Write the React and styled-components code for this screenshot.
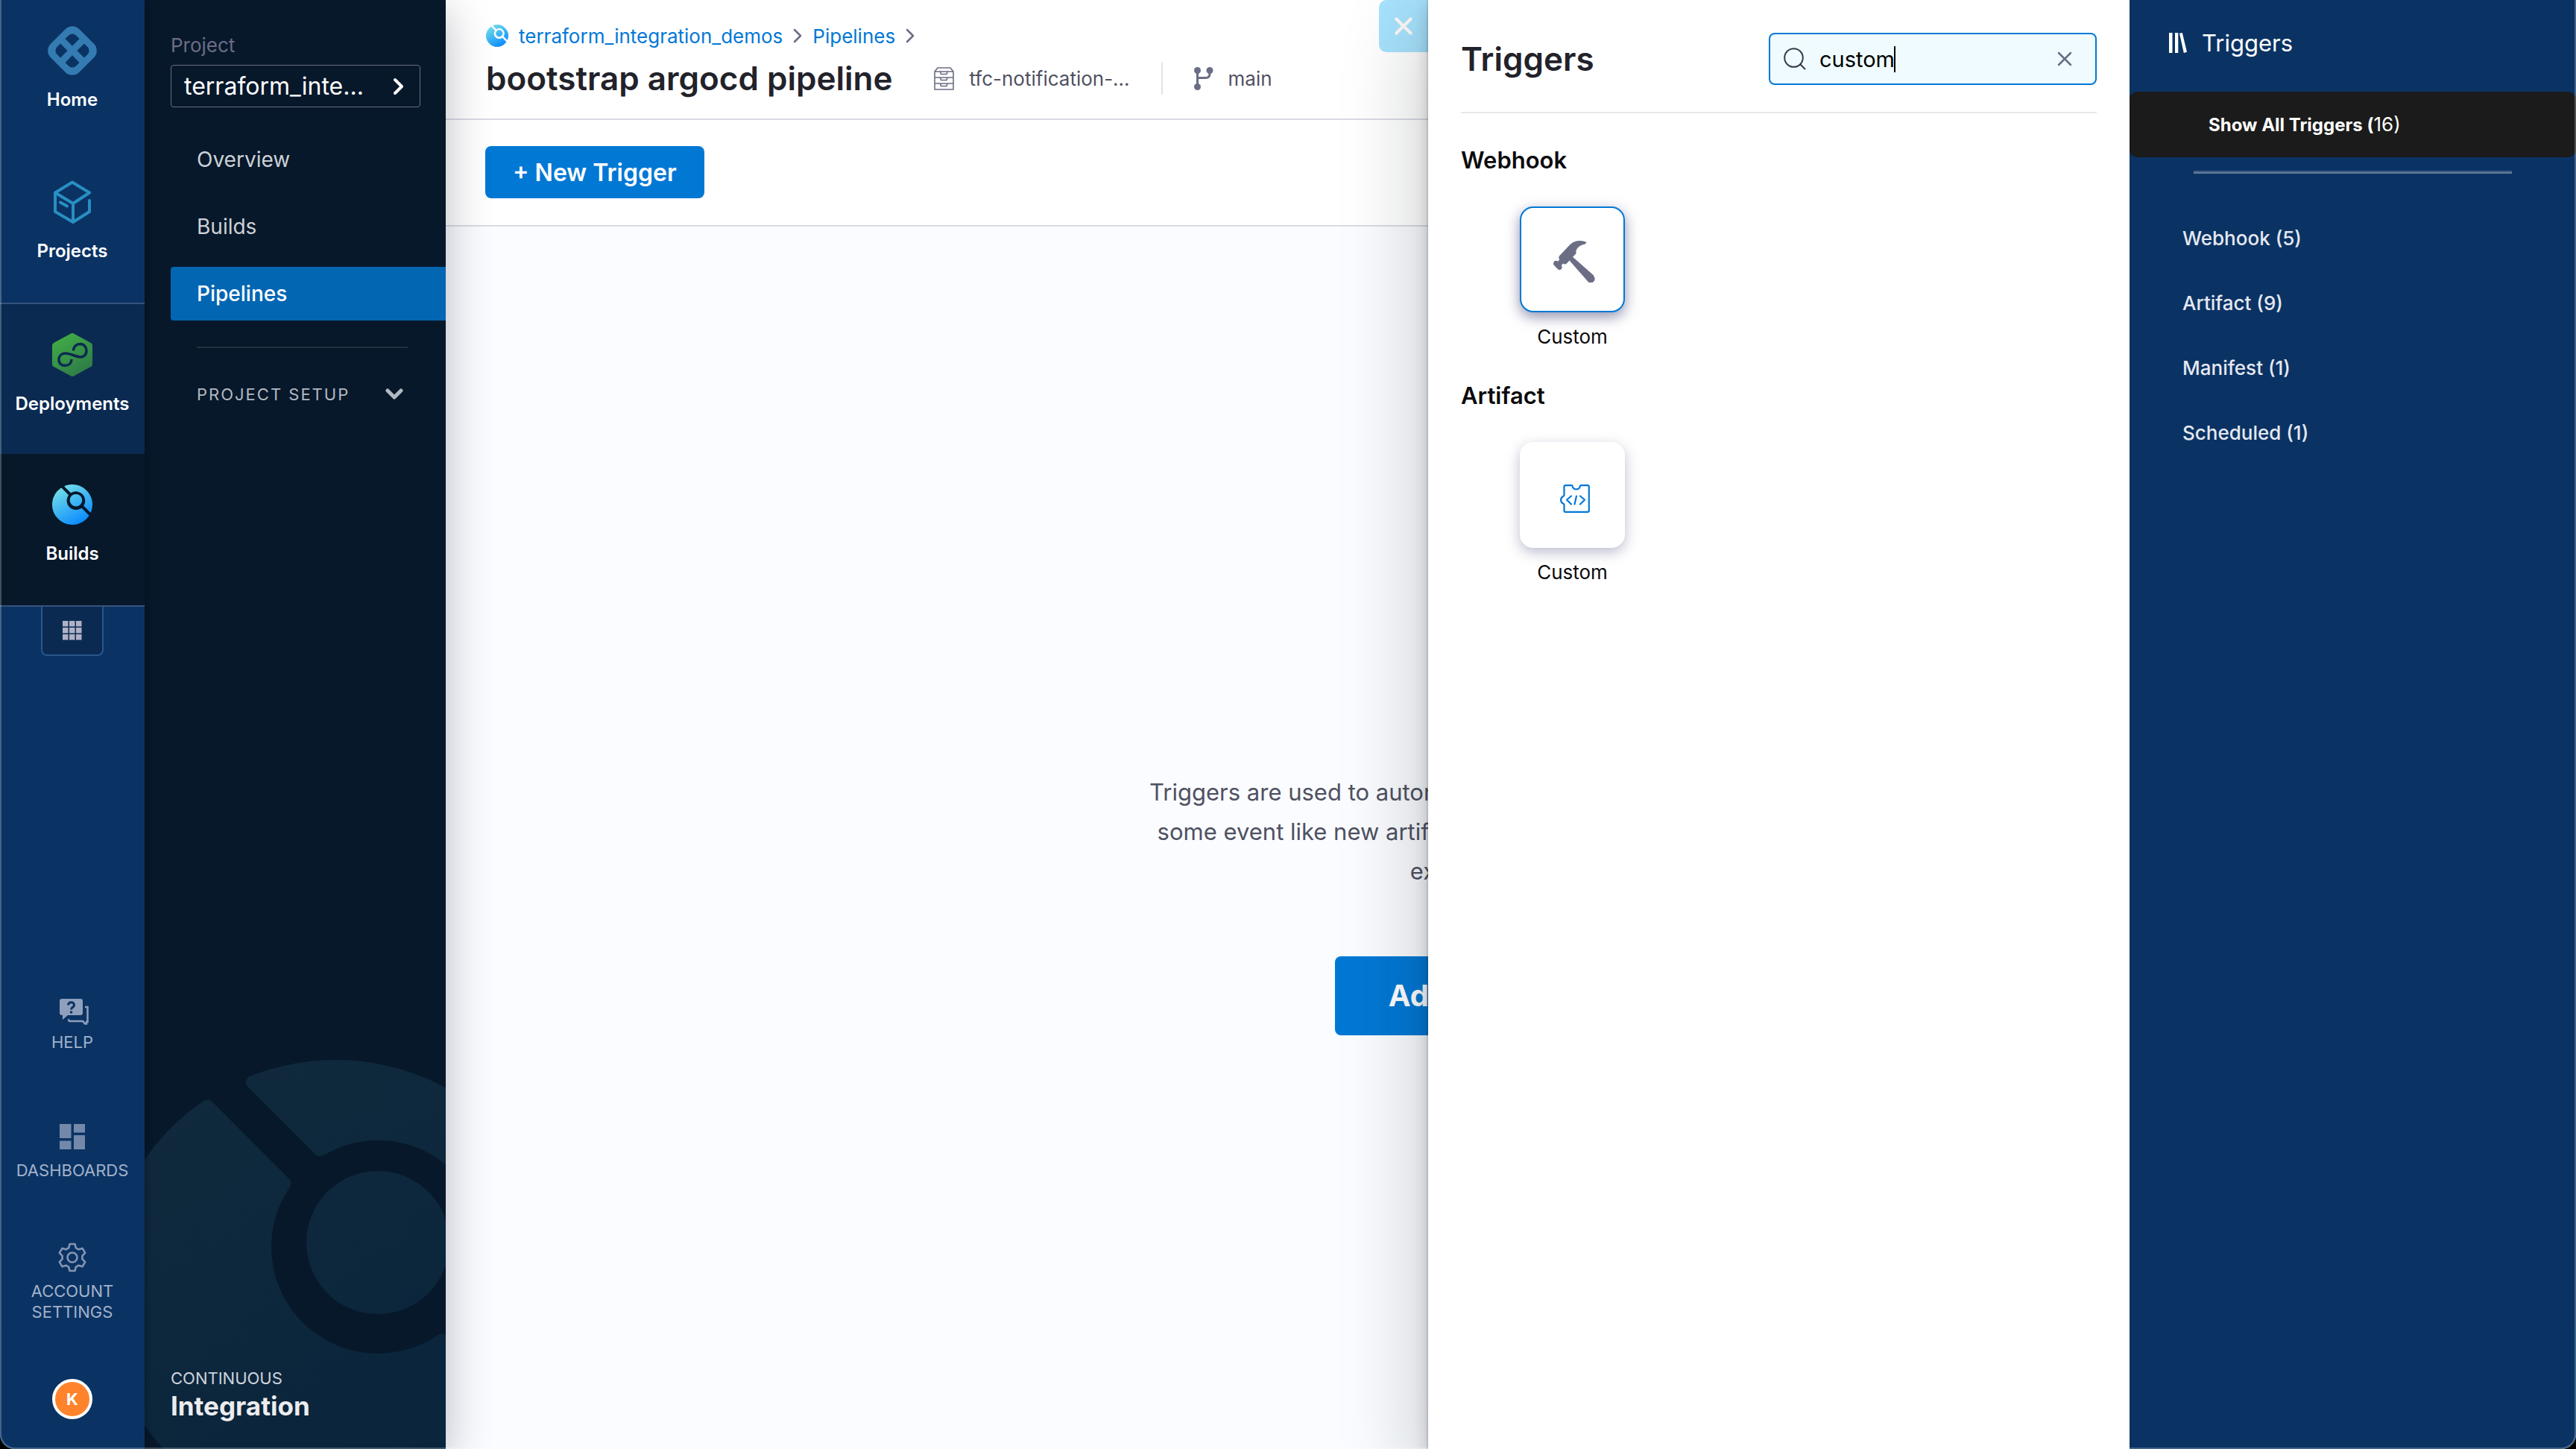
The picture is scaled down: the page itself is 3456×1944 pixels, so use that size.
import React from 'react';
import styled, { createGlobalStyle } from 'styled-components';

const GlobalStyle = createGlobalStyle`
  *, *::before, *::after { box-sizing: border-box; }
  html, body { margin: 0; background: #000; }
  body { font-family: Inter, "Liberation Sans", sans-serif; color: #22222a; }
  button, input { font: inherit; color: inherit; margin: 0; }
  button { border: 0; padding: 0; background: none; cursor: pointer; }
  a { color: inherit; text-decoration: none; }
  h1, h2, h3, p, ul { margin: 0; padding: 0; }
  ul { list-style: none; }
  svg { display: block; flex: none; }
`;

const Window = styled.div`
  position: relative;
  display: flex;
  height: 100vh;
  overflow: hidden;
  border-radius: 0 0 20px 20px;
  background: #fafcff;
  &::after {
    content: '';
    position: absolute;
    inset: 0;
    z-index: 9;
    border: 2px solid rgba(255, 255, 255, 0.24);
    border-top: 0;
    border-radius: 0 0 20px 20px;
    pointer-events: none;
  }
`;

/* Global rail */
const Rail = styled.nav`
  position: relative;
  z-index: 3;
  display: flex;
  flex-direction: column;
  align-items: center;
  flex: none;
  width: 194px;
  padding-bottom: 40px;
  background: #0a3364;
  box-shadow: 0 0 10px rgba(0, 0, 0, 0.4);
`;

const RailLink = styled.a`
  display: flex;
  flex-direction: column;
  align-items: center;
  gap: 17px;
  width: 100%;
  height: 203px;
  padding-top: 35px;
  color: #fff;
  font-size: 24px;
  font-weight: 600;
  line-height: 32px;
  background: ${(p) => p.$bg || 'transparent'};
  border-top: ${(p) => (p.$ruled ? '2px solid #38527a' : '0')};
`;

const RailIcon = styled.span`
  display: flex;
  align-items: center;
  height: 66px;
`;

const AppsButton = styled.button`
  display: flex;
  align-items: center;
  justify-content: center;
  width: 84px;
  height: 66px;
  background: #0a2a52;
  border: 2px solid #2a568c;
  border-top: 0;
  border-radius: 0 0 8px 8px;
`;

const RailRule = styled.div`
  width: 100%;
  height: 2px;
  background: #38527a;
`;

const RailFooter = styled.div`
  display: flex;
  flex-direction: column;
  align-items: center;
  margin-top: auto;
`;

const FooterLink = styled.a`
  display: flex;
  flex-direction: column;
  align-items: center;
  gap: ${(p) => p.$gap}px;
  margin-bottom: ${(p) => p.$after}px;
  color: #a3b1c9;
  font-size: 22px;
  line-height: 28px;
  text-align: center;
`;

const Avatar = styled.button`
  width: 54px;
  height: 54px;
  border: 4px solid #fff;
  border-radius: 50%;
  background: #ff832b;
  color: #fff;
  font-size: 22px;
  font-weight: 700;
  line-height: 44px;
`;

/* Project navigation */
const SideNav = styled.nav`
  position: relative;
  z-index: 2;
  display: flex;
  flex-direction: column;
  flex: none;
  width: 404px;
  padding: 45px 0 36px 35px;
  background: #07182b;
  box-shadow: 0 16px 56px rgba(40, 41, 61, 0.32);
`;

const Watermark = styled.div`
  position: absolute;
  inset: 0;
  overflow: hidden;
  svg { position: absolute; left: -56px; bottom: -102px; }
`;

const FieldLabel = styled.span`
  color: #6b6d85;
  font-size: 26px;
  line-height: 32px;
`;

const ProjectPicker = styled.button`
  display: flex;
  align-items: center;
  justify-content: space-between;
  width: 335px;
  height: 57px;
  margin-top: 10px;
  padding: 0 20px 0 17px;
  border: 1px solid #6b6d85;
  border-radius: 4px;
  color: #fff;
  font-size: 32px;
`;

const NavList = styled.ul`
  display: flex;
  flex-direction: column;
  gap: 18px;
  margin-top: 34px;
`;

const NavLink = styled.a`
  display: flex;
  align-items: center;
  height: 72px;
  padding-left: 35px;
  border-radius: 4px 0 0 4px;
  background: ${(p) => (p.$active ? '#0266b3' : 'transparent')};
  color: ${(p) => (p.$active ? '#fff' : '#cdd1d5')};
  font-size: 28px;
  font-weight: ${(p) => (p.$active ? 500 : 400)};
`;

const SetupToggle = styled.button`
  display: flex;
  align-items: center;
  justify-content: space-between;
  margin: 35px 51px 0 35px;
  padding: 46px 6px 0 0;
  border-top: 2px solid #20303f;
  color: #b3b9c0;
  font-size: 22px;
  line-height: 32px;
  letter-spacing: 2px;
`;

const ModuleName = styled.div`
  position: relative;
  margin-top: auto;
  color: #ececee;
  font-size: 35px;
  font-weight: 700;
  line-height: 44px;
  small {
    display: block;
    color: #cdd3dd;
    font-size: 22px;
    font-weight: 400;
    line-height: 30px;
  }
`;

/* Page */
const Page = styled.main`
  display: flex;
  flex-direction: column;
  flex: 1;
  min-width: 0;
`;

const PageHeader = styled.header`
  height: 161px;
  padding: 30px 52px 0 54px;
  background: #fff;
  border-bottom: 2px solid #d9dae6;
`;

const Crumbs = styled.div`
  display: flex;
  align-items: center;
  gap: 14px;
  height: 36px;
  color: #0278d5;
  font-size: 26px;
`;

const TitleRow = styled.div`
  display: flex;
  align-items: center;
  height: 78px;
`;

const Title = styled.h1`
  margin-right: 56px;
  font-size: 44px;
  font-weight: 600;
  line-height: 56px;
`;

const Meta = styled.span`
  display: flex;
  align-items: center;
  gap: 20px;
  color: #4f5162;
  font-size: 26px;
`;

const MetaDivider = styled.span`
  width: 2px;
  height: 44px;
  margin: 0 42px;
  background: #e3e3e8;
`;

const Toolbar = styled.div`
  padding: 35px 53px 36px;
  background: #fff;
  border-bottom: 2px solid #d9dae6;
`;

const Primary = styled.button`
  display: block;
  padding: 0 ${(p) => (p.$large ? 72 : 37)}px;
  height: ${(p) => (p.$large ? 106 : 70)}px;
  border-radius: 8px;
  background: #0278d5;
  color: #fff;
  font-size: ${(p) => (p.$large ? 40 : 32)}px;
  font-weight: ${(p) => (p.$large ? 700 : 600)};
  white-space: nowrap;
`;

const Empty = styled.section`
  display: flex;
  flex: 1;
  flex-direction: column;
  align-items: center;
  justify-content: center;
  gap: 88px;
  padding-top: 176px;
  color: #4f5162;
  font-size: 31px;
  line-height: 53px;
  text-align: center;
`;

/* Drawer */
const DrawerClose = styled.button`
  position: absolute;
  top: 0;
  right: 1540px;
  z-index: 4;
  display: flex;
  align-items: center;
  justify-content: center;
  width: 66px;
  height: 70px;
  border-radius: 10px 0 0 10px;
  background: #a7e2fc;
`;

const Drawer = styled.aside`
  position: absolute;
  top: 0;
  right: 0;
  bottom: 0;
  z-index: 5;
  display: flex;
  width: 1540px;
  background: #fff;
  box-shadow: 0 0 0 2px rgba(16, 22, 26, 0.1), 0 8px 18px rgba(16, 22, 26, 0.2),
    0 40px 100px 14px rgba(16, 22, 26, 0.2);
`;

const Catalog = styled.div`
  flex: 1;
  padding: 44px 44px 0;
`;

const CatalogHeader = styled.div`
  display: flex;
  align-items: center;
  justify-content: space-between;
  padding-bottom: 36px;
  border-bottom: 2px solid #e8e8ea;
`;

const DrawerTitle = styled.h2`
  font-size: 44px;
  font-weight: 600;
  line-height: 56px;
`;

const SearchBox = styled.label`
  display: flex;
  align-items: center;
  width: 440px;
  height: 70px;
  padding: 0 31px 0 18px;
  border: 2px solid #0278d5;
  border-radius: 8px;
  background: #effbff;
  color: #000;
  font-size: 29px;
`;

const SearchInput = styled.input`
  width: 100px;
  height: 36px;
  margin-left: 18px;
  padding: 0;
  border: 0;
  background: none;
  outline: none;
`;

const Caret = styled.span`
  width: 2px;
  height: 35px;
  margin-right: auto;
  background: #000;
`;

const Group = styled.section`
  padding-top: 43px;
  & + & { padding-top: 41px; }
`;

const GroupTitle = styled.h3`
  color: #0b0b0d;
  font-size: 31px;
  font-weight: 600;
  line-height: 40px;
`;

const TileButton = styled.button`
  display: flex;
  flex-direction: column;
  align-items: center;
  gap: 15px;
  width: 141px;
  margin: 42px 0 0 79px;
  color: #0b0b0d;
  font-size: 26px;
  line-height: 36px;
`;

const Tile = styled.span`
  display: flex;
  align-items: center;
  justify-content: center;
  width: 141px;
  height: 142px;
  padding: 5px 0 0 4px;
  border: 2px solid ${(p) => (p.$selected ? '#0278d5' : '#fff')};
  border-radius: 18px;
  background: #fff;
  box-shadow: ${(p) => (p.$selected ? '0 6px 18px rgba(96, 97, 140, 0.7)' : '0 6px 18px rgba(96, 97, 140, 0.42)')};
`;

const Categories = styled.nav`
  display: flex;
  flex-direction: column;
  flex: none;
  width: 599px;
  background: #0a3364;
  color: #e6e8f1;
`;

const CategoriesTitle = styled.h2`
  display: flex;
  align-items: center;
  gap: 20px;
  height: 123px;
  padding: 0 0 9px 53px;
  color: #fff;
  font-size: 31px;
  font-weight: 400;
`;

const ShowAll = styled.button`
  height: 88px;
  padding: 0 0 1px 106px;
  border-radius: 10px;
  background: #1b1b1b;
  color: #fff;
  font-size: 24px;
  font-weight: 700;
  text-align: left;
  span { font-size: 26px; font-weight: 400; }
`;

const Rule = styled.div`
  height: 4px;
  margin: 18px 86px 0;
  border-top: 2px solid #405c83;
  background: #647a99;
`;

const CategoryList = styled.ul`
  display: flex;
  flex-direction: column;
  margin-top: 43px;
`;

const CategoryLink = styled.a`
  display: flex;
  align-items: center;
  height: 87px;
  padding-left: 71px;
  font-size: 26px;
  font-weight: 500;
`;

/* Icons */
function BuildsMark({ size, id, from = '#73dfe7', to = '#0a8bff' }) {
  return (
    <svg width={size} height={size} viewBox="0 0 624 624" aria-hidden="true">
      <defs>
        <linearGradient id={id} x1="110" y1="40" x2="440" y2="600" gradientUnits="userSpaceOnUse">
          <stop stopColor={from} />
          <stop offset="1" stopColor={to} />
        </linearGradient>
      </defs>
      <g fill={`url(#${id})`} stroke={`url(#${id})`} strokeWidth="18" strokeLinejoin="round">
        <path d="M201.1 30A303 303 0 0 1 594 422.9L499.7 328.6A152 152 0 0 0 291.4 120.3Z" />
        <path d="M140.2 62.4L243.3 165.6A152 152 0 0 0 454.5 376.7L561.6 483.8A303 303 0 1 1 140.2 62.4Z" />
        <circle cx="369" cy="245" r="87" />
      </g>
    </svg>
  );
}

const HomeMark = () => (
  <svg width="66" height="66" viewBox="-33 -33 66 66" aria-hidden="true">
    <g transform="rotate(45)">
      <rect x="-27" y="-27" width="54" height="54" rx="13" fill="#347bb1" />
      {[0, 90, 180, 270].map((r) => (
        <path key={r} transform={`rotate(${r})`} d="M4.500 4.500H18V11A7 7 0 0 1 11 18H4.500Z" fill="#0a3364" />
      ))}
    </g>
  </svg>
);

const ProjectsMark = () => (
  <svg width="54" height="58" viewBox="0 0 54 58" fill="none" stroke="#288fc1" strokeWidth="4" strokeLinecap="round" strokeLinejoin="round" aria-hidden="true">
    <path d="M50 16.500L27 2.500L4 16.500L28 31L50 16.500M4 16.500V42L28 56L50 42V27M28 31V56" />
    <path d="M11 29.500L20 34.500" />
  </svg>
);

const DeployMark = () => (
  <svg width="54" height="58" viewBox="0 0 54 58" fill="none" aria-hidden="true">
    <defs>
      <linearGradient id="deploy" x1="10" y1="4" x2="40" y2="54" gradientUnits="userSpaceOnUse">
        <stop stopColor="#42ab45" />
        <stop offset="1" stopColor="#2e7c48" />
      </linearGradient>
    </defs>
    <path d="M27 4L50 16.500V41.500L27 54L4 41.500V16.500Z" fill="url(#deploy)" stroke="url(#deploy)" strokeWidth="8" strokeLinejoin="round" />
    <path d="M28.500 23.500C28.500 18 32.500 14.500 37.500 14.500C42.500 14.500 46 18.500 46 23.500C46 29 42 32.500 37 32C30 31 24 27 17.500 27C12.500 27 9 30.500 9 35.500C9 40.500 12.500 43.500 17.500 43.500C22.500 43.500 26 40 26 35" stroke="#0a2a52" strokeWidth="3.500" />
  </svg>
);

const GridMark = () => (
  <svg width="26" height="26" viewBox="0 0 26 26" fill="#b0b1c6" aria-hidden="true">
    {[0, 9, 18].map((y) => [0, 9, 18].map((x) => <rect key={`${x}-${y}`} x={x} y={y} width="7.500" height="7.500" />))}
  </svg>
);

const HelpMark = () => (
  <svg width="34" height="35" viewBox="0 0 34 35" overflow="visible" aria-hidden="true">
    <path d="M3 0H28Q31 0 31 3V19Q31 22 28 22H11L4 28V22H3Q0 22 0 19V3Q0 0 3 0Z" fill="#8f9fbc" />
    <path d="M34 11H37.500V31H36V33.500H34L31 30H13L11.500 27.500" fill="none" stroke="#8f9fbc" strokeWidth="2.500" />
    <path d="M11.500 8.500C11.500 3.500 19.500 3.500 19.500 8.500C19.500 11.500 15.500 11 15.500 14.500" fill="none" stroke="#0a3364" strokeWidth="3" />
    <circle cx="15.500" cy="18" r="1.800" fill="#0a3364" />
  </svg>
);

const DashboardMark = () => (
  <svg width="34" height="34" viewBox="0 0 34 34" fill="#7489a9" aria-hidden="true">
    <path d="M0 0H15.500V19H0ZM19 0H34V11.500H19ZM0 22.500H15.500V34H0ZM19 15H34V34H19Z" />
  </svg>
);

const GearMark = () => (
  <svg width="38" height="40" viewBox="0 0 38 40" fill="none" stroke="#8595b1" strokeWidth="2.600" strokeLinejoin="round" aria-hidden="true">
    <path d="M15.500 2H22.500L23.800 7.200L27.500 9.300L32.600 7.800L36.200 13.900L32.400 17.800V22.200L36.200 26.100L32.600 32.200L27.500 30.700L23.800 32.800L22.500 38H15.500L14.200 32.800L10.500 30.700L5.400 32.200L1.800 26.100L5.600 22.200V17.800L1.800 13.900L5.400 7.800L10.500 9.300L14.200 7.200Z" />
    <circle cx="19" cy="20" r="6.500" />
  </svg>
);

const Chevron = ({ w, h, d, color = 'currentColor', weight }) => (
  <svg width={w} height={h} viewBox={`0 0 ${w} ${h}`} fill="none" stroke={color} strokeWidth={weight} strokeLinecap="round" strokeLinejoin="round" aria-hidden="true">
    <path d={d} />
  </svg>
);

const CrumbArrow = () => <Chevron w={12} h={20} d="M2 2L10 10L2 18" color="#6b6d85" weight={2.5} />;

const Cross = ({ size, color, weight }) => (
  <svg width={size} height={size} viewBox="0 0 20 20" fill="none" stroke={color} strokeWidth={weight} strokeLinecap="round" aria-hidden="true">
    <path d="M2 2L18 18M18 2L2 18" />
  </svg>
);

const CabinetMark = () => (
  <svg width="27" height="31" viewBox="0 0 27 31" fill="none" stroke="#6b6d85" strokeWidth="1.600" strokeLinejoin="round" aria-hidden="true">
    <path d="M1 6L5 1H22L26 6V30H1ZM1 6H26M1 14H26M1 22H26" />
    <path d="M8.500 6L9.500 9.500H17L18 6M8.500 14L9.500 17.500H17L18 14M8.500 22L9.500 25.500H17L18 22" />
  </svg>
);

const BranchMark = () => (
  <svg width="26" height="31" viewBox="0 0 26 31" fill="#6b6d85" aria-hidden="true">
    <circle cx="4.500" cy="4.500" r="4.500" />
    <circle cx="21" cy="4.500" r="4.500" />
    <circle cx="4.500" cy="26.500" r="4.500" />
    <path d="M4.500 4V27M21 4V9Q21 14.500 15.500 14.500H4.500" fill="none" stroke="#6b6d85" strokeWidth="3" />
  </svg>
);

const SearchMark = () => (
  <svg width="30" height="30" viewBox="0 0 30 30" fill="none" stroke="#383946" strokeWidth="2" strokeLinecap="round" aria-hidden="true">
    <circle cx="13.500" cy="13.500" r="12.300" />
    <path d="M22.500 22.500L28.500 28.500" />
  </svg>
);

const HammerMark = () => (
  <svg width="56" height="56" viewBox="0 0 20 20" fill="#6b6d85" aria-hidden="true">
    <path d="M19.430 16.670L9.310 7.810l1.470-1.560c.41-.44-.15-.8.15-1.600 1.080-2.760 4.190-2.990 4.190-2.990s.45-.47.87-.92C11.980-1 9.260.7 8.040 1.800L3.830 6.250l-.86.92c-.48.51-.48 1.330 0 1.840l-.87.92c-.47-.51-1.240-.51-1.720 0s-.48 1.330 0 1.840l1.720 1.840c.48.51 1.240.51 1.720 0s.48-1.330 0-1.840l.86-.92c.48.51 1.240.51 1.720 0l1.310-1.400 8.850 10.140c.69.76 1.930.75 2.730-.02.78-.79.79-2.070-.05-2.720z" />
  </svg>
);

const PuzzleMark = () => (
  <svg width="44" height="42" viewBox="0 -4 44 42" fill="none" stroke="#0278d5" strokeWidth="2.200" strokeLinecap="round" strokeLinejoin="round" aria-hidden="true">
    <path d="M8.500 14.500V3Q8.500 1.200 10.300 1.200H18.500Q19.500 1.200 19.700 2.500A5.200 5.200 0 0 0 29.800 2.500Q30 1.200 31.200 1.200H40Q41.800 1.200 41.800 3V35Q41.800 36.800 40 36.800H10.300Q8.500 36.800 8.500 35V27Q8.500 26 7.300 25.800A5.600 5.600 0 0 1 7.300 15.700Q8.500 15.500 8.500 14.500Z" />
    <path d="M18 15.500L12 20.500L18 26.500M25 15.500L22.500 26.500M30 15.500L36 20.500L30 26.500" />
  </svg>
);

const LibraryMark = () => (
  <svg width="24" height="27" viewBox="0 0 24 27" fill="#fff" aria-hidden="true">
    <path d="M0 0H4.500V27H0ZM8 0H12.300V27H8ZM14 .8L17.800 0L24 25.800L19.800 27Z" />
  </svg>
);

const CATEGORIES = ['Webhook (5)', 'Artifact (9)', 'Manifest (1)', 'Scheduled (1)'];

export default function App() {
  return (
    <Window>
      <GlobalStyle />
      <Rail aria-label="Modules">
        <RailLink href="#home"><RailIcon><HomeMark /></RailIcon>Home</RailLink>
        <RailLink href="#projects"><RailIcon><ProjectsMark /></RailIcon>Projects</RailLink>
        <RailLink href="#deployments" $bg="#0a2a52" $ruled><RailIcon><DeployMark /></RailIcon>Deployments</RailLink>
        <RailLink href="#builds" $bg="#07182b"><RailIcon><BuildsMark size={54} id="railBuilds" /></RailIcon>Builds</RailLink>
        <RailRule />
        <AppsButton aria-label="All modules"><GridMark /></AppsButton>
        <RailFooter>
          <FooterLink href="#help" $gap={9} $after={96}><HelpMark />HELP</FooterLink>
          <FooterLink href="#dashboards" $gap={14} $after={83}><DashboardMark />DASHBOARDS</FooterLink>
          <FooterLink href="#settings" $gap={11} $after={76}><GearMark /><span>ACCOUNT<br />SETTINGS</span></FooterLink>
          <Avatar>K</Avatar>
        </RailFooter>
      </Rail>

      <SideNav aria-label="Project">
        <Watermark><BuildsMark size={624} id="watermark" from="#10293c" to="#09243c" /></Watermark>
        <FieldLabel>Project</FieldLabel>
        <ProjectPicker>
          terraform_inte...
          <Chevron w={17} h={24} d="M4 3L13 12L4 21" weight={4} />
        </ProjectPicker>
        <NavList>
          <li><NavLink href="#overview">Overview</NavLink></li>
          <li><NavLink href="#builds-list">Builds</NavLink></li>
          <li><NavLink href="#pipelines" $active>Pipelines</NavLink></li>
        </NavList>
        <SetupToggle>
          PROJECT SETUP
          <Chevron w={24} h={16} d="M3 3L12 12L21 3" weight={5} />
        </SetupToggle>
        <ModuleName><small>CONTINUOUS</small>Integration</ModuleName>
      </SideNav>

      <Page>
        <PageHeader>
          <Crumbs>
            <BuildsMark size={30} id="crumbBuilds" />
            <a href="#project">terraform_integration_demos</a>
            <CrumbArrow />
            <a href="#pipelines">Pipelines</a>
            <CrumbArrow />
          </Crumbs>
          <TitleRow>
            <Title>bootstrap argocd pipeline</Title>
            <Meta><CabinetMark />tfc-notification-...</Meta>
            <MetaDivider />
            <Meta><BranchMark />main</Meta>
          </TitleRow>
        </PageHeader>
        <Toolbar><Primary>+ New Trigger</Primary></Toolbar>
        <Empty>
          <p>
            Triggers are used to automate the execution of pipelines based on<br />
            some event like new artifact/manifest, or run on a schedule or an<br />
            external webhook.
          </p>
          <Primary $large>Add New Trigger</Primary>
        </Empty>
      </Page>

      <DrawerClose aria-label="Close"><Cross size={24} color="#fbfaf8" weight={3.5} /></DrawerClose>
      <Drawer>
        <Catalog>
          <CatalogHeader>
            <DrawerTitle>Triggers</DrawerTitle>
            <SearchBox>
              <SearchMark />
              <SearchInput aria-label="Search triggers" defaultValue="custom" />
              <Caret />
              <button aria-label="Clear search"><Cross size={20} color="#6b6d85" weight={2.5} /></button>
            </SearchBox>
          </CatalogHeader>
          <Group>
            <GroupTitle>Webhook</GroupTitle>
            <TileButton><Tile $selected><HammerMark /></Tile>Custom</TileButton>
          </Group>
          <Group>
            <GroupTitle>Artifact</GroupTitle>
            <TileButton><Tile><PuzzleMark /></Tile>Custom</TileButton>
          </Group>
        </Catalog>
        <Categories aria-label="Trigger categories">
          <CategoriesTitle><LibraryMark />Triggers</CategoriesTitle>
          <ShowAll>Show All Triggers (<span>16)</span></ShowAll>
          <Rule />
          <CategoryList>
            {CATEGORIES.map((name) => (
              <li key={name}><CategoryLink href="#category">{name}</CategoryLink></li>
            ))}
          </CategoryList>
        </Categories>
      </Drawer>
    </Window>
  );
}
